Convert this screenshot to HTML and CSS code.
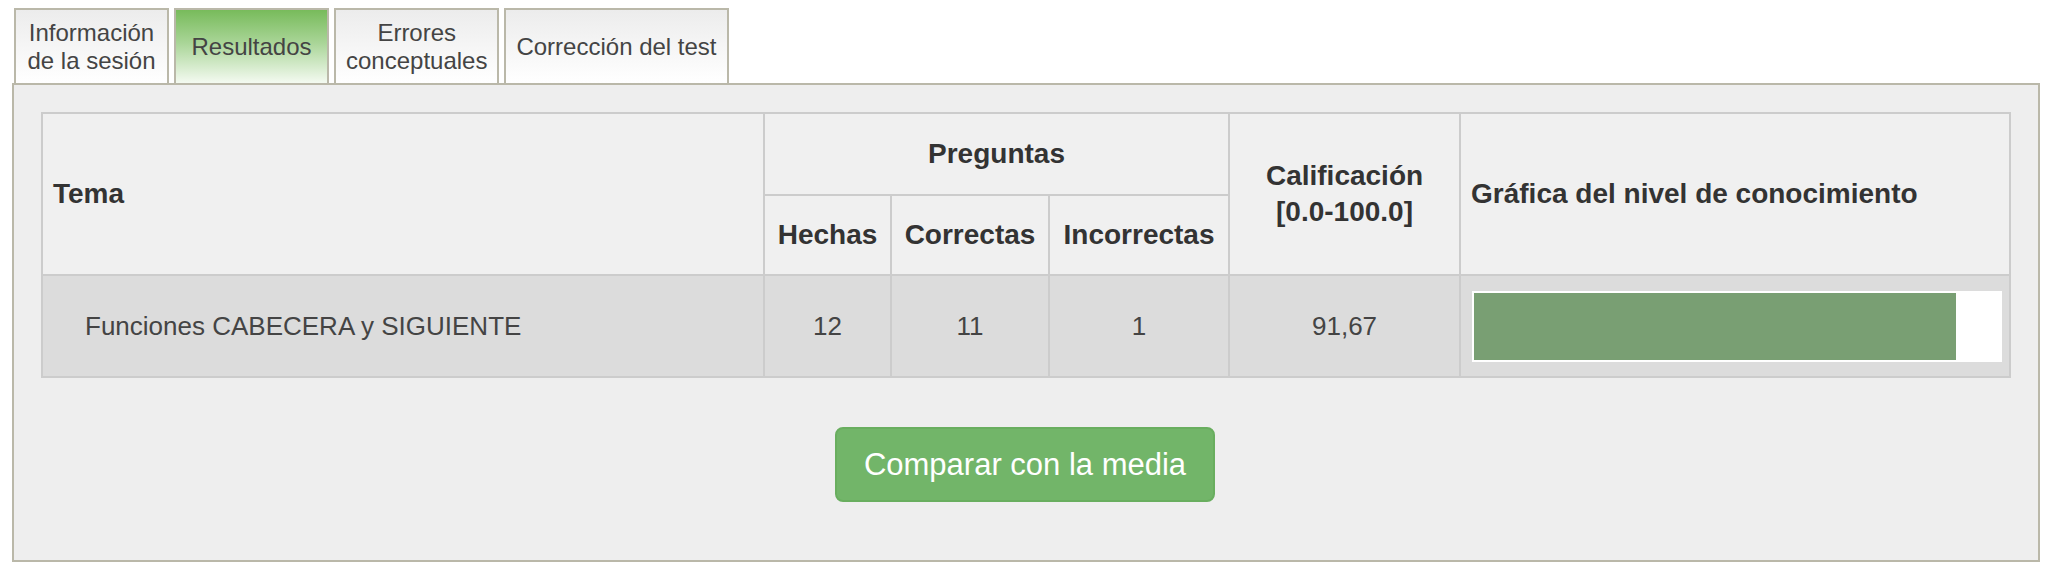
FILE: index.html
```html
<!DOCTYPE html>
<html lang="es">
<head>
<meta charset="utf-8">
<title>Resultados</title>
<link rel="stylesheet" href="styles.css">
</head>
<body>
<div class="page">
  <div class="tabs">
    <div class="tab">Información<br>de la sesión</div>
    <div class="tab active">Resultados</div>
    <div class="tab">Errores<br>conceptuales</div>
    <div class="tab">Corrección del test</div>
  </div>
  <div class="panel">
    <table class="results">
      <colgroup>
        <col class="c-tema">
        <col class="c-hechas">
        <col class="c-corr">
        <col class="c-inc">
        <col class="c-cal">
        <col class="c-graf">
      </colgroup>
      <thead>
        <tr class="h1">
          <th rowspan="2" class="left">Tema</th>
          <th colspan="3">Preguntas</th>
          <th rowspan="2">Calificación<br>[0.0-100.0]</th>
          <th rowspan="2" class="left">Gráfica del nivel de conocimiento</th>
        </tr>
        <tr class="h2">
          <th>Hechas</th>
          <th>Correctas</th>
          <th>Incorrectas</th>
        </tr>
      </thead>
      <tbody>
        <tr class="data">
          <td class="topic">Funciones CABECERA y SIGUIENTE</td>
          <td>12</td>
          <td>11</td>
          <td>1</td>
          <td>91,67</td>
          <td class="graph"><div class="bar-box"><div class="bar" style="width:91.67%"></div></div></td>
        </tr>
      </tbody>
    </table>
    <div class="actions">
      <button class="btn">Comparar con la media</button>
    </div>
  </div>
</div>
</body>
</html>
```
FILE: styles.css
```css
* { box-sizing: border-box; }
html, body { margin: 0; padding: 0; background: #ffffff; }
body { font-family: "Liberation Sans", Arial, Helvetica, sans-serif; }

.page { margin: 8px 12px 0 12px; }

.tabs {
  display: flex;
  gap: 5px;
  padding-left: 2px;
  height: 75px;
}
.tab {
  min-width: 155px;
  height: 75px;
  padding: 0 10px;
  border: 2px solid #bab8a9;
  border-bottom: none;
  background: linear-gradient(to bottom, #ececec 0%, #ffffff 100%);
  color: #444444;
  font-size: 24px;
  line-height: 28px;
  display: flex;
  align-items: center;
  justify-content: center;
  text-align: center;
}
.tab.active {
  background: linear-gradient(to bottom, #78bb5b 0%, #a9d597 45%, #f4faf1 100%);
}

.panel {
  border: 2px solid #bab8a9;
  background: #eeeeee;
  padding: 27px 29px 58px 27px;
}

.results {
  width: 100%;
  table-layout: fixed;
  border-collapse: collapse;
  border: 2px solid #cccccc;
}
.c-tema { width: 722px; }
.c-hechas { width: 127px; }
.c-corr { width: 158px; }
.c-inc { width: 180px; }
.c-cal { width: 231px; }
.c-graf { width: 550px; }

.results th, .results td {
  border: 2px solid #cccccc;
  padding: 0 10px;
  text-align: center;
  vertical-align: middle;
}
.results th {
  background: #f0f0f0;
  color: #333333;
  font-size: 28px;
  font-weight: bold;
  line-height: 36px;
}
.results th.left { text-align: left; }
.results tr.h1 { height: 82px; }
.results tr.h2 { height: 80px; }
.results tr.data { height: 102px; }
.results td {
  background: #dcdcdc;
  color: #444444;
  font-size: 26px;
}
.results td.topic {
  text-align: left;
  padding-left: 42px;
}
.results td.graph {
  padding: 0 7px 0 11px;
}
.bar-box {
  height: 71px;
  background: #ffffff;
  padding: 2px;
}
.bar {
  height: 100%;
  background: #799f73;
}

.actions {
  display: flex;
  justify-content: center;
  margin-top: 49px;
}
.btn {
  width: 380px;
  height: 75px;
  border: 2px solid #69ae5f;
  border-radius: 8px;
  background: #72b569;
  color: #ffffff;
  font-family: "Liberation Sans", Arial, Helvetica, sans-serif;
  font-size: 31px;
  padding: 0;
}
```
